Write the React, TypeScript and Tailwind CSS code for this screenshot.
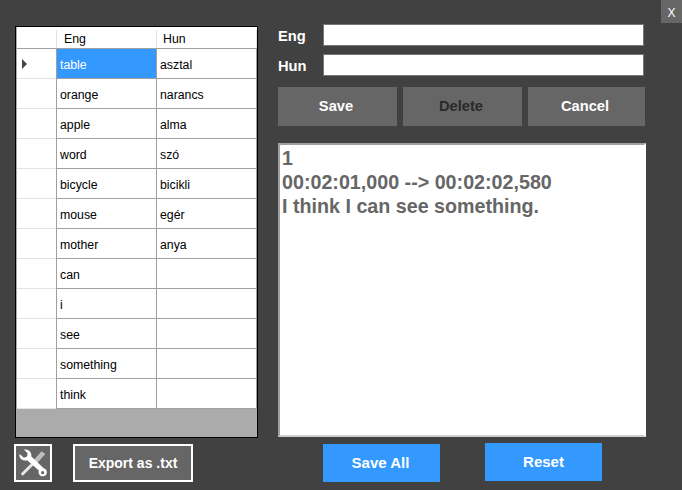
import React from 'react';

const ROWS = [
  ['table', 'asztal'],
  ['orange', 'narancs'],
  ['apple', 'alma'],
  ['word', 'szó'],
  ['bicycle', 'bicikli'],
  ['mouse', 'egér'],
  ['mother', 'anya'],
  ['can', ''],
  ['i', ''],
  ['see', ''],
  ['something', ''],
  ['think', ''],
];

function ToolsIcon() {
  return (
    <svg width="30" height="30" viewBox="0 0 28 28" fill="none">
      {/* screwdriver */}
      <path d="M4.5 26 L2.5 24 L14 12.5 L16 14.5 Z" fill="#e6e6e6" />
      <path d="M15 11 L22 3 L25.5 5.5 L18 14 Z" fill="#bdbdbd" />
      {/* wrench */}
      <path
        d="M1.5 5.5 L5.5 9 L8.5 8 L9 5 L5.5 1.5 C9.5 0.5 13 3.5 12.5 8 L24 19 C26.5 19.5 27.5 22 26.5 24.5 C25 27 21.5 27 20 25 C19 23.5 19 22 19.5 21 L8.5 11.5 C4.5 12.5 0.5 9.5 1.5 5.5 Z"
        fill="#fff"
      />
      <circle cx="23" cy="23" r="1.5" fill="#666" />
    </svg>
  );
}

function GridRow({ eng, hun, active }: { eng: string; hun: string; active: boolean }) {
  return (
    <div className="flex h-[30px] text-[12.3px]">
      <div className="flex w-[39px] items-center border-b border-[#e3e3e3] pl-[5px]">
        {active && (
          <span className="h-0 w-0 border-y-[5px] border-l-[5px] border-y-transparent border-l-[#444]" />
        )}
      </div>
      <div
        className={`flex w-[101px] items-center border-x border-b border-[#a0a0a0] pt-[3px] pl-[3px] ${
          active ? 'bg-[#3399ff] text-white' : 'text-black'
        }`}
      >
        {eng}
      </div>
      <div className="flex w-[100px] items-center border-r border-b border-[#a0a0a0] pt-[3px] pl-[3px] text-black">
        {hun}
      </div>
    </div>
  );
}

export default function App() {
  return (
    <div className="relative flex h-[490px] w-[682px] overflow-hidden bg-[#414141] font-['Liberation_Sans',Arial,sans-serif]">
      <button className="absolute top-0 right-0 flex h-[23px] w-[21px] items-center justify-center bg-[#666] pt-[2px] text-[12px] text-white">
        X
      </button>

      {/* Left: word grid */}
      <div className="ml-[14px] flex w-[245px] flex-col">
        <div className="mt-[26px] ml-[1px] flex h-[412px] w-[243px] flex-col border border-black bg-[#ababab] pl-[1px]">
          <div className="flex h-[22px] w-[240px] border-b border-[#a0a0a0] bg-white pt-[3px] text-[12.3px] text-black">
            <div className="w-[39px]" />
            <div className="flex w-[101px] items-center border-x border-[#e3e3e3] pl-[7px]">Eng</div>
            <div className="flex w-[100px] items-center border-r border-[#e3e3e3] pl-[6px]">Hun</div>
          </div>
          <div className="w-[240px] bg-white">
            {ROWS.map(([eng, hun], i) => (
              <GridRow key={eng} eng={eng} hun={hun} active={i === 0} />
            ))}
          </div>
        </div>

        <div className="mt-[6px] flex gap-[21px]">
          <button className="flex h-[38px] w-[38px] items-center justify-center border-2 border-white bg-[#666]">
            <ToolsIcon />
          </button>
          <button className="h-[38px] w-[120px] border-2 border-white bg-[#666] text-[14px] font-bold text-white">
            Export as .txt
          </button>
        </div>
      </div>

      {/* Right: editor */}
      <div className="ml-[19px] flex w-[368px] flex-col">
        <div className="mt-[24px] flex h-[22px] items-center">
          <label className="w-[45px] pt-[2px] text-[14.7px] font-bold text-white">Eng</label>
          <input className="h-[22px] w-[321px] border border-[#777] bg-white" />
        </div>
        <div className="mt-[8px] flex h-[22px] items-center">
          <label className="w-[45px] pt-[2px] text-[14.7px] font-bold text-white">Hun</label>
          <input className="h-[22px] w-[321px] border border-[#777] bg-white" />
        </div>

        <div className="mt-[11px] flex gap-[6px] text-[14.7px] font-bold">
          <button className="h-[39px] w-[119px] bg-[#666] pr-[3px] text-white">Save</button>
          <button className="h-[39px] w-[119px] bg-[#666] pr-[3px] text-[#2a2a2a]">Delete</button>
          <button className="h-[39px] w-[117px] bg-[#666] pr-[3px] text-white">Cancel</button>
        </div>

        <div className="mt-[17px] h-[294px] w-[368px] border-2 border-[#a0a0a0] border-r-white border-b-[#d0d0d0] bg-white px-[2px] pt-[1px] text-[19.7px] leading-[24px] font-bold text-[#666]">
          <div>1</div>
          <div>00:02:01,000 --&gt; 00:02:02,580</div>
          <div>I think I can see something.</div>
        </div>

        <div className="mt-[6px] flex items-start pl-[45px]">
          <button className="mt-[1px] h-[38px] w-[117px] bg-[#3399ff] pr-[2px] text-[15px] font-bold text-white">
            Save All
          </button>
          <button className="ml-[45px] h-[38px] w-[117px] bg-[#3399ff] text-[15px] font-bold text-white">
            Reset
          </button>
        </div>
      </div>
    </div>
  );
}
